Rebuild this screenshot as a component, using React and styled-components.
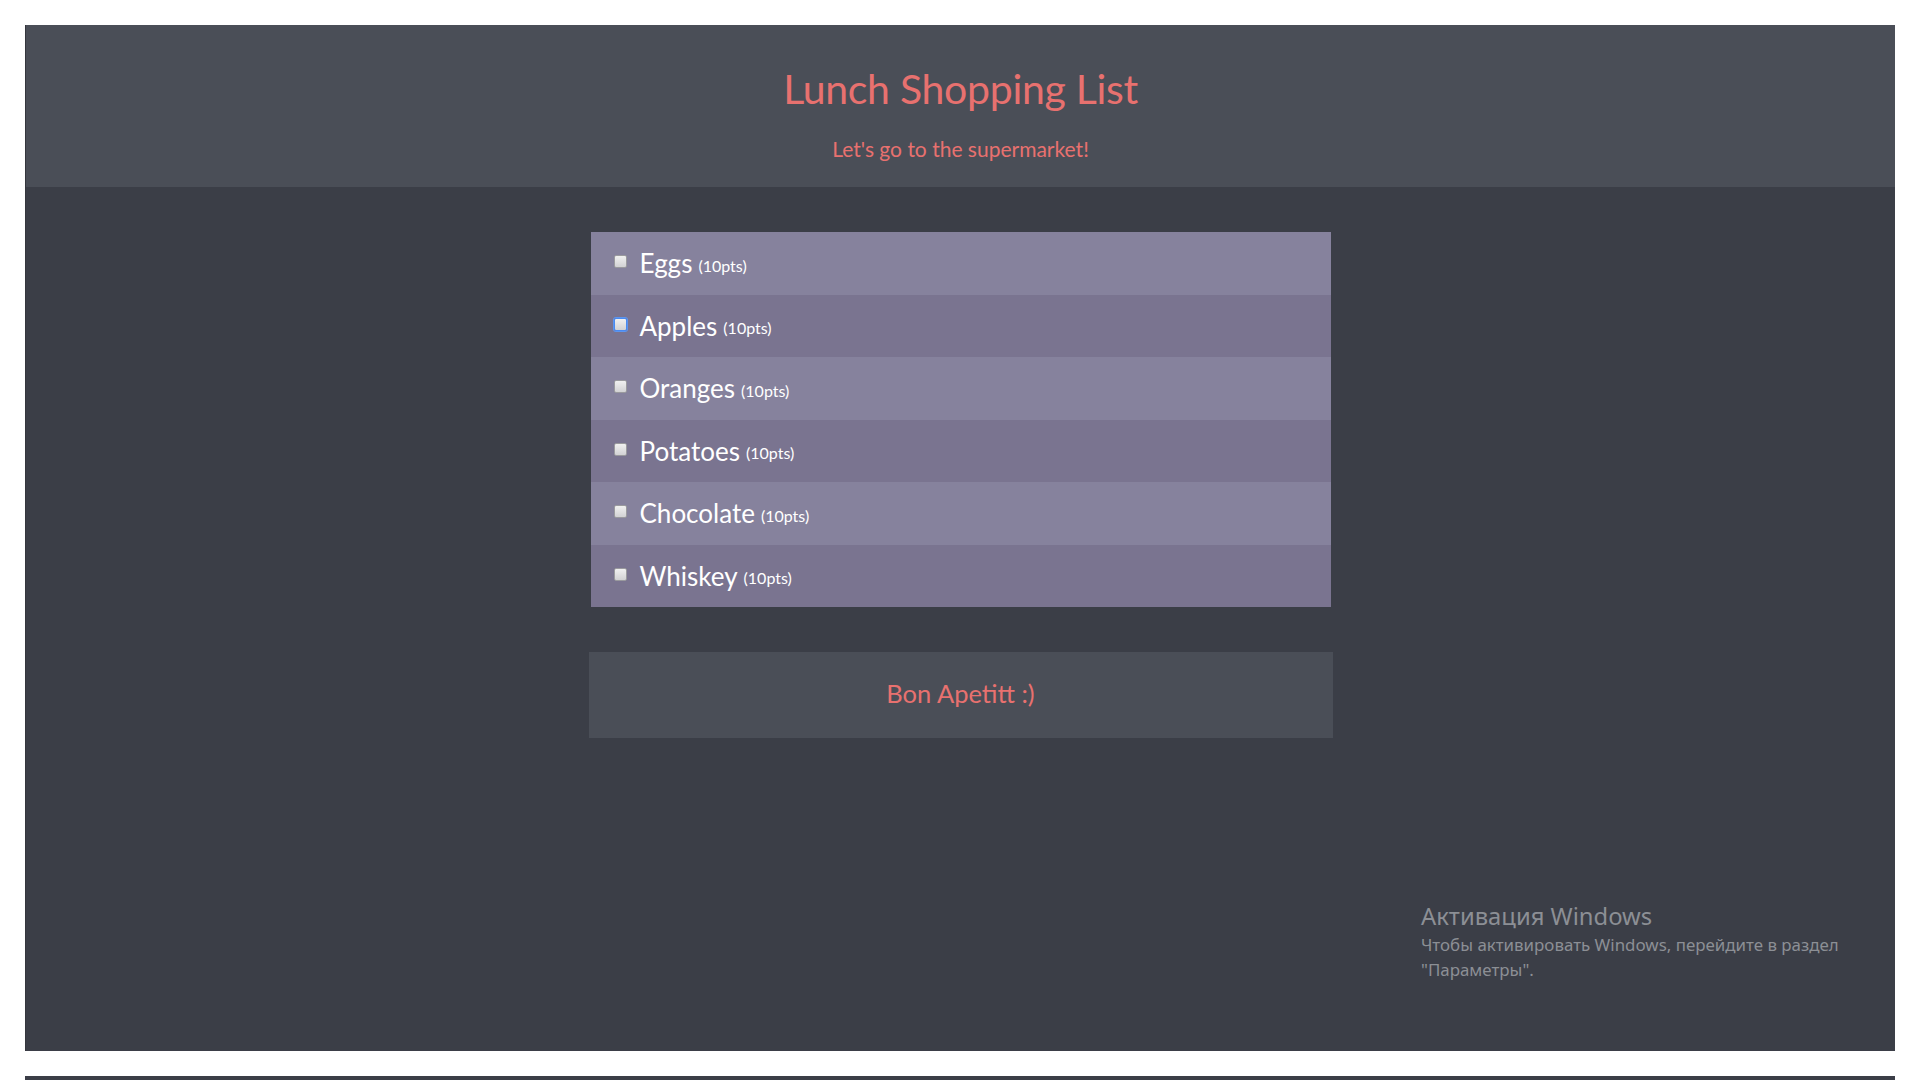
import React from 'react';
import styled, { createGlobalStyle } from 'styled-components';

const GlobalStyle = createGlobalStyle`
    body{
        margin: 0;
        background: #FFFFFF;
        font-family: Lato, "Open Sans", sans-serif;
    }
`

const Page = styled.div`
    width: 1920px;
    height: 1080px;
    padding: 25px 25px 0;
    box-sizing: border-box;
    display: flex;
    flex-direction: column;
`

const Frame = styled.div`
    position: relative;
    height: 1026px;
    background: #3B3E47;
    border-left: 1px solid #34363d;
    display: flex;
    flex-direction: column;
`

const Header = styled.header`
    height: 162px;
    background: #4A4E57;
    display: flex;
    flex-direction: column;
    align-items: center;
    .title{
        margin: 40px 0 0;
        font-size: 41px;
        font-weight: 400;
        color: #E8716F;
        line-height: 48px;
        letter-spacing: -0.3px;
    }
    .subtitle{
        margin: 23px 0 0;
        font-size: 21px;
        font-weight: 400;
        color: #E8716F;
        line-height: 26px;
    }
`

const Main = styled.main`
    padding-top: 45px;
    display: flex;
    flex-direction: column;
    align-items: center;
`

const List = styled.ul`
    list-style: none;
    margin: 0;
    padding: 0;
    width: 740px;
`

const Item = styled.li`
    height: 62.5px;
    display: flex;
    align-items: center;
    padding-left: 23px;
    background: ${p => p.$odd ? '#7A7490' : '#86829D'};
    color: #FFFFFF;
    .name{
        margin-left: 13px;
        font-size: 26px;
        line-height: 30px;
    }
    .pts{
        margin-left: 6px;
        font-size: 16px;
        position: relative;
        top: 2px;
    }
`

const Check = styled.span`
    width: 13px;
    height: 13px;
    box-sizing: border-box;
    border-radius: 2px;
    border: 1px solid ${p => p.$focus ? '#4A8AF0' : '#9a9a9e'};
    box-shadow: ${p => p.$focus ? '0 0 0 1px #5d95ee' : 'none'};
    background: linear-gradient(#f0f0f0, #d2d2d4);
    margin-top: -3px;
`

const Footer = styled.div`
    margin-top: 45px;
    width: 744px;
    height: 86px;
    padding-bottom: 4px;
    box-sizing: border-box;
    background: #4A4E57;
    display: flex;
    align-items: center;
    justify-content: center;
    font-size: 25.5px;
    color: #E8716F;
`

const Watermark = styled.div`
    position: absolute;
    left: 1395px;
    top: 875px;
    font-family: "Noto Sans", "Open Sans", sans-serif;
    color: #8C8F95;
    .big{
        font-size: 23.8px;
        line-height: 32px;
    }
    .small{
        font-size: 16.9px;
        line-height: 25px;
    }
`

const BottomBar = styled.div`
    margin-top: 25px;
    flex: 1;
    background: #3B3E47;
`

const items = ['Eggs', 'Apples', 'Oranges', 'Potatoes', 'Chocolate', 'Whiskey'];

function App() {
    return (
        <Page>
            <GlobalStyle />
            <Frame>
                <Header>
                    <h1 className="title">Lunch Shopping List</h1>
                    <p className="subtitle">Let's go to the supermarket!</p>
                </Header>
                <Main>
                    <List>
                        {items.map((name, i) => (
                            <Item key={name} $odd={i % 2 === 1}>
                                <Check $focus={name === 'Apples'} />
                                <span className="name">{name}</span>
                                <span className="pts">(10pts)</span>
                            </Item>
                        ))}
                    </List>
                    <Footer>Bon Apetitt :)</Footer>
                </Main>
                <Watermark>
                    <div className="big">Активация Windows</div>
                    <div className="small">Чтобы активировать Windows, перейдите в раздел<br />"Параметры".</div>
                </Watermark>
            </Frame>
            <BottomBar />
        </Page>
    )
}
export default App
